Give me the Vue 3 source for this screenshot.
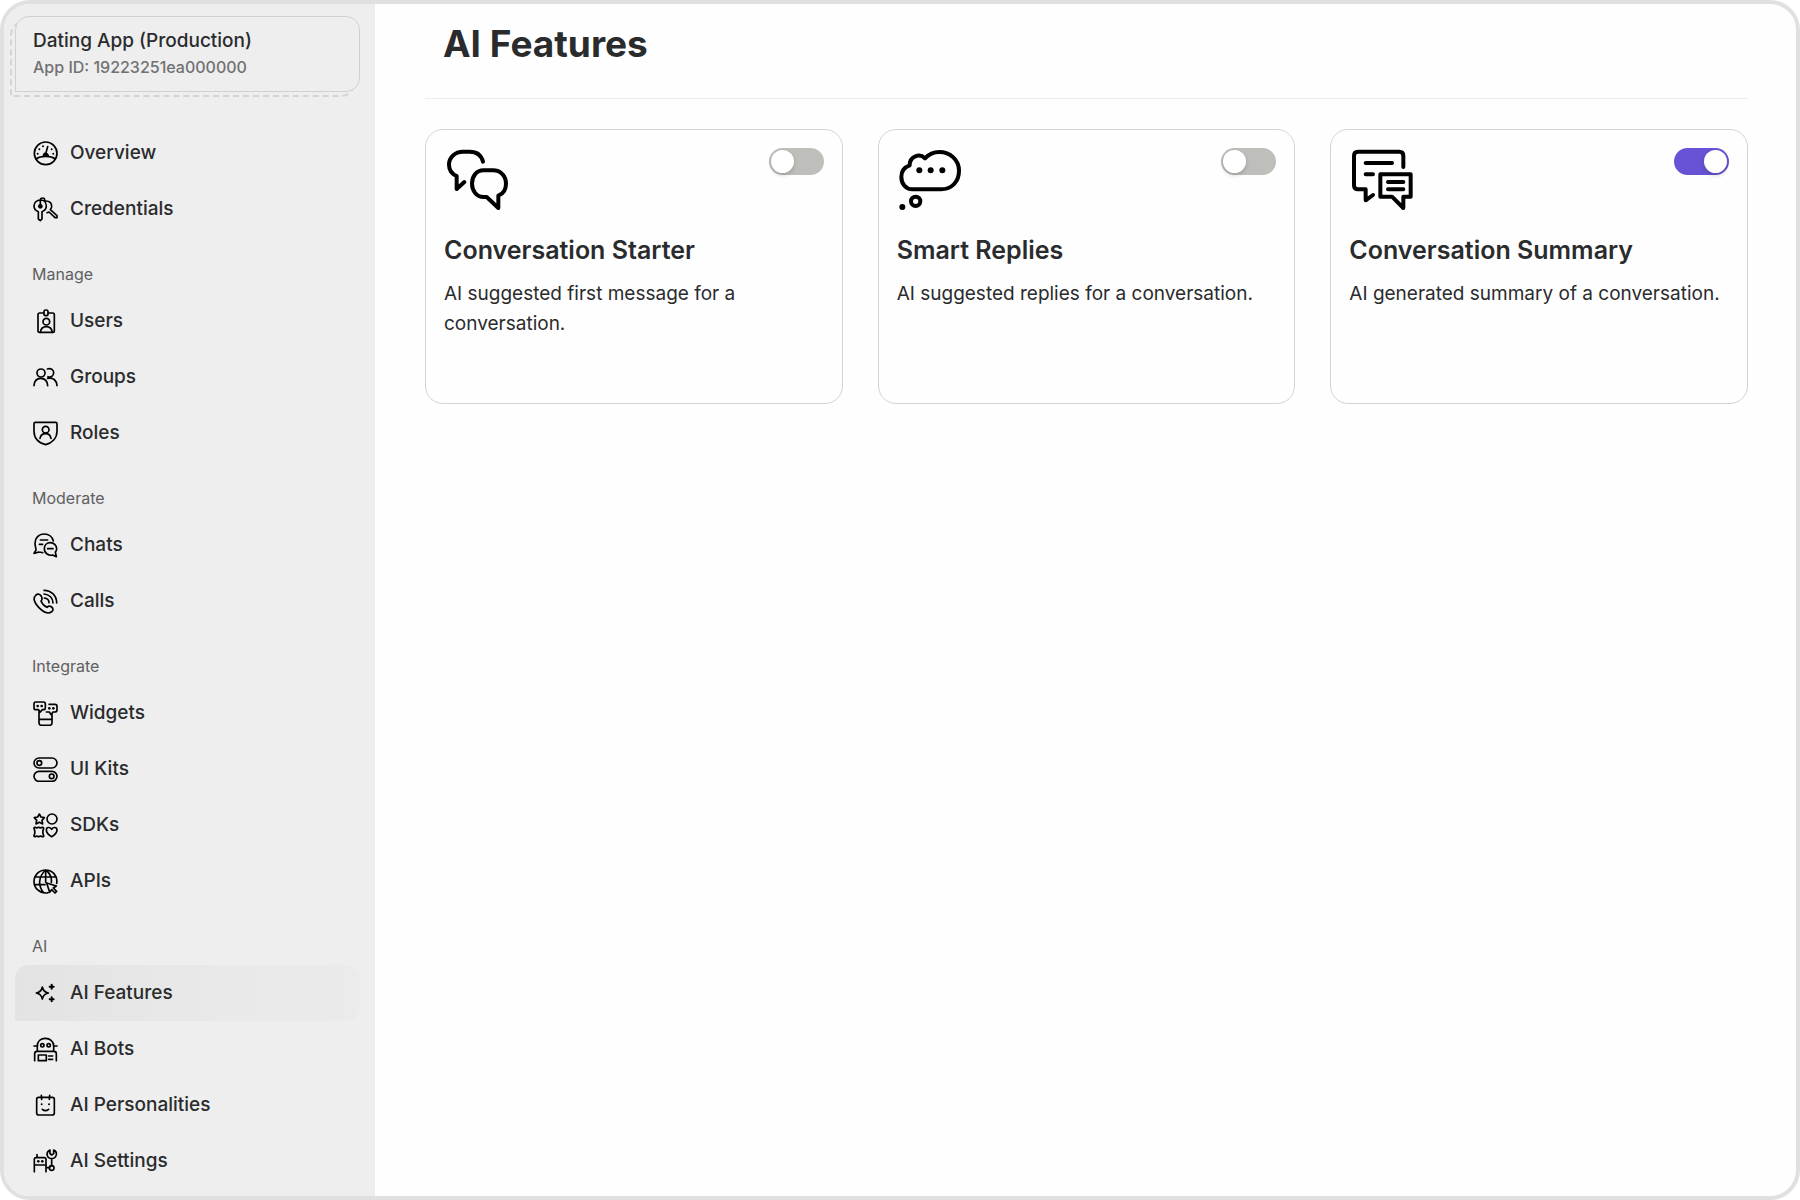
<script setup>
import { reactive } from 'vue'

const app = { name: 'Dating App (Production)', id: '19223251ea000000' }

const groups = [
  { title: '', items: [
    { icon: 'overview', label: 'Overview' },
    { icon: 'credentials', label: 'Credentials' },
  ] },
  { title: 'Manage', items: [
    { icon: 'users', label: 'Users' },
    { icon: 'groups', label: 'Groups' },
    { icon: 'roles', label: 'Roles' },
  ] },
  { title: 'Moderate', items: [
    { icon: 'chats', label: 'Chats' },
    { icon: 'calls', label: 'Calls' },
  ] },
  { title: 'Integrate', items: [
    { icon: 'widgets', label: 'Widgets' },
    { icon: 'kits', label: 'UI Kits' },
    { icon: 'sdks', label: 'SDKs' },
    { icon: 'apis', label: 'APIs' },
  ] },
  { title: 'AI', items: [
    { icon: 'features', label: 'AI Features', active: true },
    { icon: 'bots', label: 'AI Bots' },
    { icon: 'personalities', label: 'AI Personalities' },
    { icon: 'settings', label: 'AI Settings' },
  ] },
]

const features = reactive([
  { key: 'starter', title: 'Conversation Starter', text: 'AI suggested first message for a conversation.', enabled: false },
  { key: 'replies', title: 'Smart Replies', text: 'AI suggested replies for a conversation.', enabled: false },
  { key: 'summary', title: 'Conversation Summary', text: 'AI generated summary of a conversation.', enabled: true },
])
</script>

<template>
  <div class="frame">
    <svg class="sprite" aria-hidden="true">
      <symbol id="overview" viewBox="0 0 75 75">
        <circle cx="38" cy="37" r="34" />
        <path d="M9 54C18 47 28 46 38 46S58 47 67 54M31 45C32 39 36 36 38 36S45 39 46 45M38 38L44 17" />
        <g class="dots"><circle cx="14" cy="38" r="3" /><circle cx="19" cy="25" r="3" /><circle cx="30" cy="16" r="3" /><circle cx="56" cy="25" r="3" /><circle cx="61" cy="38" r="3" /><circle cx="38" cy="42" r="5" /></g>
      </symbol>
      <symbol id="credentials" viewBox="0 0 75 75">
        <path d="M16 44C8 41 3 34 3 27C3 17 11 9 22 9S40 17 40 27C40 34 35 41 27 44V66L22 71L16 66ZM22 27V8C22 4 25 3 29 3S35 5 35 9V12M38 12C49 12 56 18 56 28C56 32 55 35 52 38L72 56V62H66L48 45L42 47" />
        <g class="dots"><circle cx="22" cy="28" r="7" /></g>
      </symbol>
      <symbol id="users" viewBox="0 0 75 75">
        <path d="M32 12H20Q15 12 15 17V65Q15 70 20 70H59Q64 70 64 65V17Q64 12 59 12H46" />
        <rect x="33" y="3" width="12" height="17" rx="5" />
        <circle cx="40" cy="38" r="10" />
        <path d="M22 70C24 57 31 53 40 53S56 57 58 70" />
      </symbol>
      <symbol id="groups" viewBox="0 0 75 75">
        <circle cx="24" cy="24" r="12" />
        <path d="M3 62C4 46 12 40 23 40S43 46 44 62M43 12C54 8 63 15 62 24C61 34 53 38 45 35M44 40C62 37 71 47 72 62" />
      </symbol>
      <symbol id="roles" viewBox="0 0 75 75">
        <path d="M7 4H68Q72 4 72 8V30C72 52 57 66 38 71C18 66 3 52 3 30V8Q3 4 7 4Z" />
        <circle cx="38" cy="26" r="10" />
        <path d="M21 52C23 42 29 38 38 38S52 42 54 52" />
      </symbol>
      <symbol id="chats" viewBox="0 0 75 75">
        <path d="M61 24C57 10 46 3 34 3C17 3 6 15 6 31C6 39 9 45 9 51L3 61L18 57C23 58 26 59 29 59M22 21H44M19 34H29M44 47H60M67 57L70 71L59 66C47 69 34 61 34 47C34 36 42 29 52 29S71 37 71 47C71 51 70 54 67 57Z" />
      </symbol>
      <symbol id="calls" viewBox="0 0 75 75">
        <path d="M9 18C15 13 21 16 25 22C29 29 28 32 24 36C27 44 35 52 42 55C46 51 50 50 56 54C62 59 61 65 55 69C45 76 29 67 17 55C3 41-1 27 9 18ZM33 4C55 4 71 20 71 42M33 15C49 16 60 27 60 42M34 27C43 28 48 33 48 41" />
      </symbol>
      <symbol id="widgets" viewBox="0 0 75 75">
        <path d="M8 3H31Q37 3 37 9V20Q37 26 31 26H28L22 33L16 26H8Q3 26 3 20V9Q3 3 8 3ZM48 10H66Q72 10 72 16V27Q72 33 66 33H60L54 41L49 33H40M18 30V65Q18 73 26 73H49Q57 73 57 65V40M18 55H57" />
        <g class="dots"><circle cx="14" cy="15" r="4" /><circle cx="26" cy="15" r="4" /><circle cx="49" cy="22" r="4" /><circle cx="61" cy="22" r="4" /></g>
      </symbol>
      <symbol id="kits" viewBox="0 0 75 75">
        <rect x="3" y="3" width="69" height="30" rx="15" /><circle cx="19" cy="18" r="7" />
        <rect x="3" y="43" width="69" height="30" rx="15" /><circle cx="56" cy="58" r="7" />
      </symbol>
      <symbol id="sdks" viewBox="0 0 75 75">
        <path d="M19 3L24 12L34 14L27 22L29 33L19 28L9 33L11 22L4 14L14 12Z" />
        <circle cx="57" cy="18" r="15" />
        <path d="M6 43Q11 46 17 43Q23 46 28 43Q34 43 31 49Q28 57 31 65Q34 72 28 71Q23 68 17 71Q11 68 6 71Q1 71 4 65Q7 57 4 49Q1 43 6 43ZM56 71C47 66 40 59 40 51C40 42 51 41 56 49C61 41 72 42 72 51C72 59 65 66 56 71Z" />
      </symbol>
      <symbol id="apis" viewBox="0 0 75 75">
        <path d="M71 43C75 21 58 3 38 3S3 19 3 38S19 72 38 72C41 72 43 72 45 71M38 3C15 24 15 51 32 71M38 3C51 13 57 26 55 40M38 3V40M7 24H68M4 47H36M41 42L70 51L61 57L71 67L66 72L56 62L50 70Z" />
      </symbol>
      <symbol id="features" viewBox="0 0 75 75">
        <path d="M28 18Q31 33 46 36Q31 39 28 54Q25 39 10 36Q25 33 28 18Z" />
        <path class="plus" d="M56 11V23M50 17H62M56 49V61M50 55H62" />
      </symbol>
      <symbol id="bots" viewBox="0 0 75 75">
        <path d="M13 42V27C13 12 24 4 37 4S62 12 62 27V42M3 27H13M62 27H72M5 71V50Q5 43 12 43H63Q70 43 70 50V71M16 54H40V71H16ZM47 57H59M47 67H59" />
        <circle cx="28" cy="25" r="5" /><circle cx="47" cy="25" r="5" />
      </symbol>
      <symbol id="personalities" viewBox="0 0 75 75">
        <path d="M17 13H58Q64 13 64 19V60Q64 66 58 66H17Q11 66 11 60V19Q11 13 17 13ZM25 7L26 19M50 7L49 19M28 49Q37 57 47 49" />
        <g class="dots"><circle cx="26" cy="34" r="3" /><circle cx="48" cy="34" r="3" /></g>
      </symbol>
      <symbol id="settings" viewBox="0 0 75 75">
        <path d="M4 68V31Q4 26 9 26H34Q39 26 39 31V68M4 48H39M12 17V26M39 56H50M56 29V50M51 3V14L56 18L62 14V3C69 6 71 10 70 17C68 25 63 29 56 29S44 25 42 17C42 10 44 6 51 3Z" />
        <circle cx="56" cy="57" r="7" />
        <g class="dots"><circle cx="16" cy="37" r="4" /><circle cx="28" cy="37" r="4" /></g>
      </symbol>
      <symbol id="starter" viewBox="0 0 198 198">
        <path d="M117 41C112 22 98 11 77 11H57C33 11 15 28 15 50C15 65 23 77 38 84V123L61 102M118 67H147C170 67 186 84 186 107C186 124 178 137 163 143V180L128 147H118C98 147 84 128 84 107C84 84 98 67 118 67Z" />
      </symbol>
      <symbol id="replies" viewBox="0 0 198 198">
        <path d="M45 124H132C165 124 186 100 186 68C186 36 160 12 127 12C109 12 95 19 84 31C68 15 38 24 38 52C21 58 13 70 13 87C13 109 28 124 45 124Z" />
        <circle cx="56" cy="160" r="14" />
        <g class="dots"><circle cx="67" cy="67" r="9" /><circle cx="101" cy="67" r="9" /><circle cx="136" cy="67" r="9" /><circle cx="16" cy="177" r="9" /></g>
      </symbol>
      <symbol id="summary" viewBox="0 0 198 198">
        <path d="M163 57V23Q163 11 151 11H27Q15 11 15 23V112Q15 124 27 124H50V157L72 141M50 45H129M50 79H72M94 79H185V146H163V180L129 146H94ZM117 102H163M117 124H163" />
      </symbol>
    </svg>

    <aside class="sidebar">
      <button class="app" type="button">
        <span class="app-body">
          <span class="app-name">{{ app.name }}</span>
          <span class="app-id">App ID: {{ app.id }}</span>
        </span>
      </button>
      <nav class="nav">
        <section v-for="group in groups" :key="group.title">
          <h2 v-if="group.title" class="group-title">{{ group.title }}</h2>
          <a
            v-for="item in group.items"
            :key="item.icon"
            href="#"
            class="item"
            :class="{ active: item.active }"
            :aria-current="item.active ? 'page' : undefined"
          >
            <svg class="item-icon" aria-hidden="true"><use :href="'#' + item.icon" /></svg>
            <span>{{ item.label }}</span>
          </a>
        </section>
      </nav>
    </aside>

    <main class="main">
      <h1 class="heading">AI Features</h1>
      <div class="cards">
        <article v-for="feature in features" :key="feature.key" class="card">
          <div class="card-top">
            <svg class="card-icon" aria-hidden="true"><use :href="'#' + feature.key" /></svg>
            <input
              v-model="feature.enabled"
              class="toggle"
              type="checkbox"
              role="switch"
              :aria-labelledby="feature.key + '-title'"
            />
          </div>
          <h3 :id="feature.key + '-title'" class="card-title">{{ feature.title }}</h3>
          <p class="card-text">{{ feature.text }}</p>
        </article>
      </div>
    </main>
  </div>
</template>

<style>
body {
  background: #fff;
}
</style>

<style scoped>
.frame {
  display: flex;
  box-sizing: border-box;
  min-height: 100vh;
  border: 4px solid #e0e0e0;
  border-radius: 30px;
  overflow: hidden;
  background: #fefefe;
  color: #2a2b2d;
  font-family: Inter, "Liberation Sans", sans-serif;
}

.sprite {
  position: absolute;
  width: 0;
  height: 0;
}

.dots {
  fill: #000;
  stroke: none;
}

.plus {
  stroke-width: 6px;
}

.sidebar {
  flex: none;
  box-sizing: border-box;
  width: 371px;
  padding: 12px 15px 0 11px;
  background: #eee;
}

/* The dashed outline sits behind the solid card, shifted down and left. */
.app {
  position: relative;
  z-index: 0;
  display: block;
  width: 100%;
  padding: 0;
  border: 0;
  background: none;
  color: inherit;
  font: inherit;
  text-align: left;
}

.app::before {
  content: "";
  position: absolute;
  z-index: -1;
  inset: 5px 5px -5px -5px;
  border: 2px dashed #d4d4d4;
  border-radius: 14px 14px 14px 0;
}

.app-body {
  display: flex;
  flex-direction: column;
  gap: 4px;
  padding: 11px 17px 13px;
  border: 1px solid #d0d0d0;
  border-radius: 14px 14px 14px 0;
  background: #eee;
}

.app-name {
  font-size: 19px;
  font-weight: 500;
  line-height: 25px;
}

.app-id {
  color: #707174;
  font-size: 16px;
  font-weight: 500;
  line-height: 21px;
}

.nav {
  padding-top: 33px;
}

.group-title {
  box-sizing: border-box;
  height: 56px;
  margin: 0;
  padding: 26px 17px 0;
  color: #5f6063;
  font-size: 16px;
  font-weight: 400;
  line-height: 22px;
}

.item {
  display: flex;
  align-items: center;
  gap: 12px;
  height: 56px;
  padding: 0 18px;
  border-radius: 14px 14px 14px 0;
  color: inherit;
  font-size: 19px;
  font-weight: 500;
  line-height: 26px;
  text-decoration: none;
}

.item.active {
  background: linear-gradient(90deg, #e3e3e3, #e9e9e9 60%, #ebebeb);
}

.item-icon,
.card-icon {
  flex: none;
  fill: none;
  stroke: #000;
  stroke-linecap: round;
  stroke-linejoin: round;
}

.item-icon {
  width: 25px;
  height: 25px;
  stroke-width: 5px;
}

.main {
  flex: 1;
  min-width: 0;
  padding: 0 48px 0 50px;
}

.heading {
  margin: 0 0 30px;
  padding: 16px 18px 30px;
  border-bottom: 1px solid #ececec;
  font-size: 37px;
  font-weight: 700;
  line-height: 48px;
}

.cards {
  display: grid;
  grid-template-columns: repeat(3, 1fr);
  gap: 35px;
}

.card {
  box-sizing: border-box;
  min-height: 275px;
  padding: 18px;
  border: 1px solid #d3d3d3;
  border-radius: 18px;
}

.card-top {
  display: flex;
  align-items: flex-start;
  justify-content: space-between;
}

.card-icon {
  width: 66px;
  height: 66px;
  stroke-width: 12px;
}

.toggle {
  display: flex;
  box-sizing: border-box;
  width: 55px;
  height: 27px;
  margin: 0;
  padding: 2px;
  border-radius: 14px;
  background: #bebfbb;
  appearance: none;
}

.toggle::before {
  content: "";
  width: 23px;
  height: 23px;
  border-radius: 50%;
  background: #fff;
  box-shadow: 0 2px 4px rgba(0, 35, 11, 0.2);
}

.toggle:checked {
  justify-content: flex-end;
  background: #6852d6;
}

.card-title {
  margin: 20px 0 13px;
  font-size: 25px;
  font-weight: 600;
  line-height: 32px;
}

.card-text {
  margin: 0;
  font-size: 19px;
  line-height: 30px;
}
</style>
